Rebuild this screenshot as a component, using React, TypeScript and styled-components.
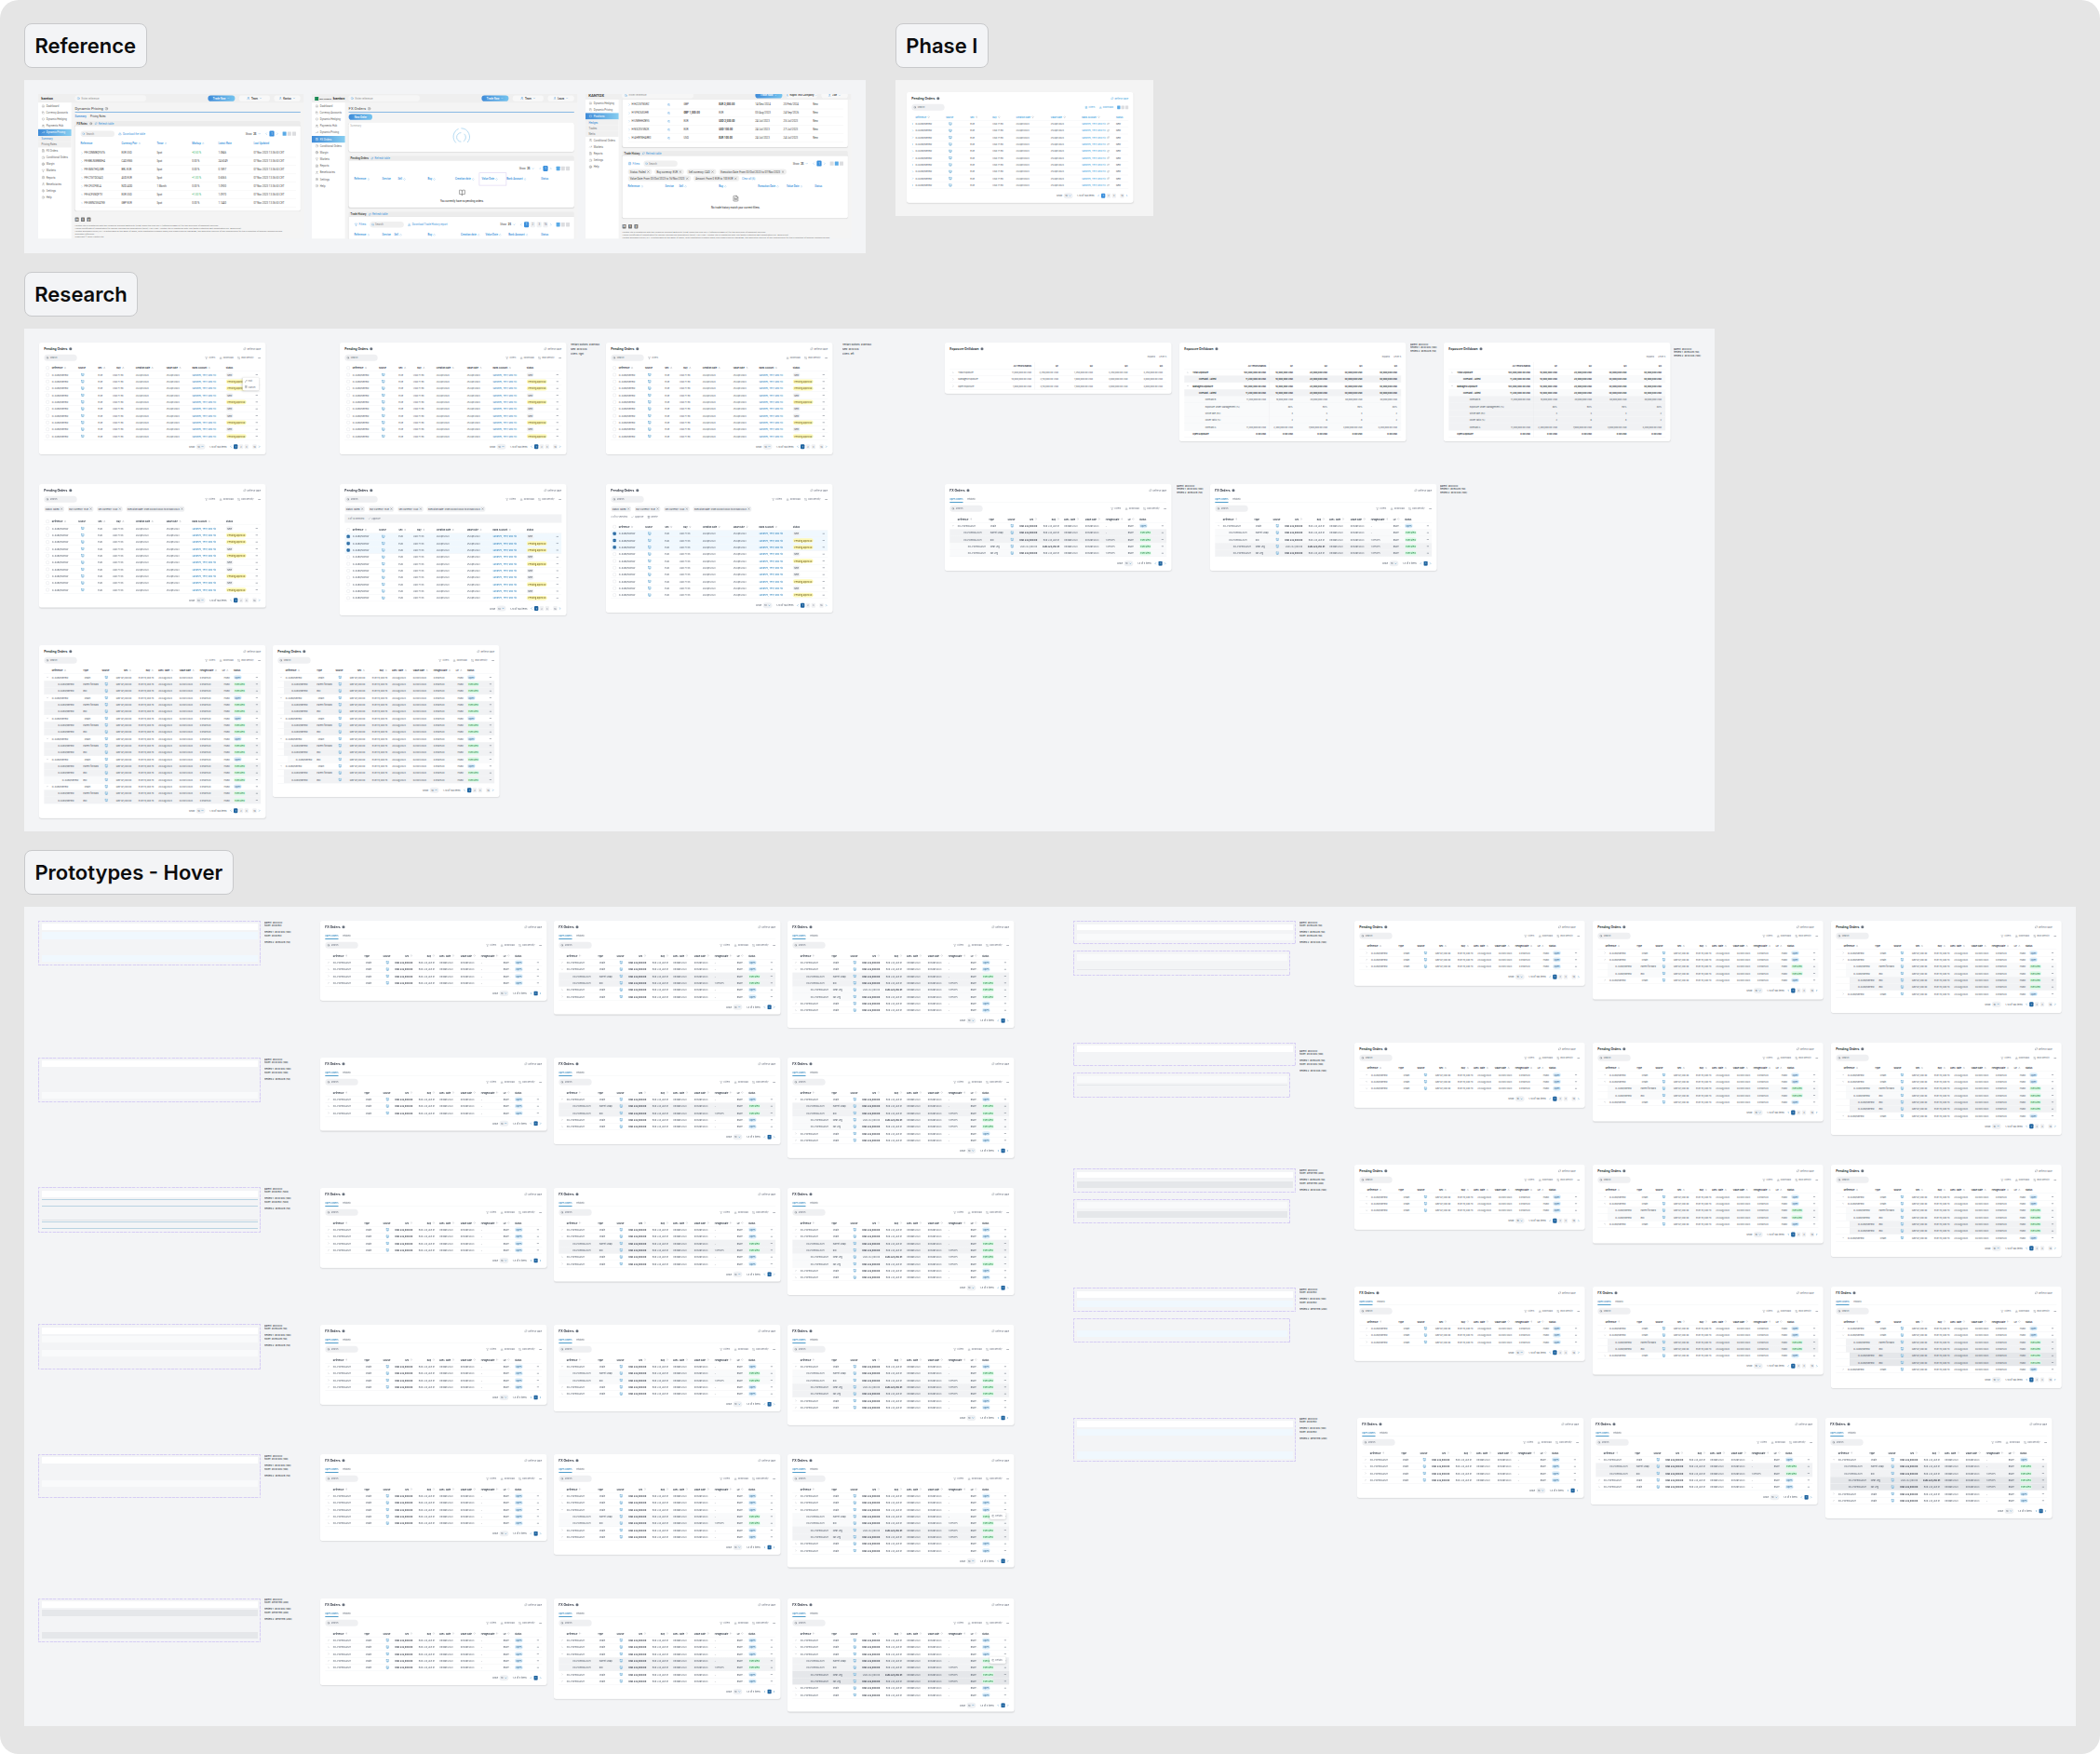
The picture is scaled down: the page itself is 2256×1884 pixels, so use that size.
import React from "react";
import styled, { createGlobalStyle, css } from "styled-components";
import {
  BookOpen, Check, ChevronDown, ChevronLeft, ChevronRight, ChevronsUpDown, ClipboardList, Clock, Copy,
  Download, ExternalLink, FileText, Filter, Globe, HelpCircle, Home, Info, Monitor, MoreHorizontal,
  Pencil, RefreshCw, Search, Settings, ShieldCheck, Trash2, TrendingUp, User, Users, X, ArrowUpDown,
} from "lucide-react";

const Global = createGlobalStyle`
  html, body { margin: 0; background: #fff; }
  * { box-sizing: border-box; }
`;

/* ---------- canvas ---------- */

const Canvas = styled.main`
  position: relative;
  width: 2256px;
  height: 1884px;
  border-radius: 20px;
  background: #e5e5e5;
  overflow: hidden;
  font-family: Inter, "Liberation Sans", sans-serif;
  color: #1f2937;
`;

const SectionLabel = styled.h2<{ $x: number; $y: number; $w: number }>`
  position: absolute;
  left: ${(p) => p.$x}px;
  top: ${(p) => p.$y}px;
  width: ${(p) => p.$w}px;
  height: 48px;
  margin: 0;
  display: flex;
  align-items: center;
  justify-content: center;
  border: 1px solid #c8c9cb;
  border-radius: 8px;
  background: #f3f4f6;
  color: #0c0c0d;
  font-size: 22px;
  font-weight: 600;
  white-space: nowrap;
`;

const SectionPanel = styled.section<{ $x: number; $y: number; $w: number; $h: number; $bg?: string }>`
  position: absolute;
  left: ${(p) => p.$x}px;
  top: ${(p) => p.$y}px;
  width: ${(p) => p.$w}px;
  height: ${(p) => p.$h}px;
  background: ${(p) => p.$bg || "#f3f4f6"};
`;

const Frame = styled.div<{ $x: number; $y: number; $w: number; $zoom?: number }>`
  position: absolute;
  left: ${(p) => p.$x}px;
  top: ${(p) => p.$y}px;
  width: ${(p) => p.$w}px;
  transform: scale(${(p) => 1 / (p.$zoom || 6)});
  transform-origin: 0 0;
`;

/* ---------- table card ---------- */

const CardBox = styled.article<{ $h: number }>`
  position: relative;
  display: flex;
  flex-direction: column;
  height: ${(p) => p.$h}px;
  padding: 20px 32px 0;
  border-radius: 16px;
  background: #fff;
  box-shadow: 0 6px 8px rgba(0, 0, 0, 0.09);
  font-size: 14px;
  color: #374151;
  white-space: nowrap;
`;

const TitleRow = styled.header<{ $pad?: number }>`
  display: flex;
  align-items: center;
  justify-content: space-between;
  height: 40px;
  padding-right: ${(p) => p.$pad || 0}px;
`;

const Title = styled.h3`
  display: flex;
  align-items: center;
  gap: 10px;
  margin: 0;
  font-size: 20px;
  font-weight: 600;
  color: #111827;
`;

const InfoDot = styled(Info)`
  width: 22px;
  height: 22px;
  fill: #4b5563;
  stroke: #d1d5db;
`;

const Action = styled.span<{ $color?: string }>`
  display: inline-flex;
  align-items: center;
  gap: 6px;
  color: ${(p) => p.$color || "#6b7280"};
  svg { width: 19px; height: 19px; }
`;

const Toolbar = styled.div`
  display: flex;
  align-items: center;
  gap: 26px;
  height: 42px;
  margin-top: 17px;
`;

const Push = styled.span`
  flex: 1;
`;

const SearchPill = styled.span`
  display: inline-flex;
  align-items: center;
  gap: 8px;
  width: 212px;
  height: 42px;
  padding: 0 12px;
  border-radius: 21px;
  background: #eff0f2;
  color: #6b7280;
  svg { width: 18px; height: 18px; color: #374151; }
`;

const Tabs = styled.nav`
  display: flex;
  gap: 28px;
  height: 43px;
  margin-top: 17px;
  border-bottom: 2px solid #eceef0;
`;

const Tab = styled.span<{ $on?: boolean }>`
  display: flex;
  align-items: center;
  height: 43px;
  font-weight: ${(p) => (p.$on ? 500 : 400)};
  color: ${(p) => (p.$on ? "#1e7bb8" : "#4b5563")};
  border-bottom: ${(p) => (p.$on ? "6px solid #4f9dcb" : "6px solid transparent")};
`;

const Chips = styled.div`
  display: flex;
  align-items: center;
  gap: 22px;
  height: 42px;
  margin-top: 20px;
`;

const Chip = styled.span`
  display: inline-flex;
  align-items: center;
  gap: 6px;
  height: 38px;
  padding: 0 8px;
  border-radius: 19px;
  background: #f0f1f3;
  color: #374151;
  font-size: 14px;
  svg { width: 20px; height: 20px; }
`;

const BulkBar = styled.div<{ $filled?: boolean }>`
  display: flex;
  align-items: center;
  gap: 24px;
  height: ${(p) => (p.$filled ? 52 : 34)}px;
  margin-top: 14px;
  padding: 0 ${(p) => (p.$filled ? 20 : 0)}px;
  background: ${(p) => (p.$filled ? "#f1f2f4" : "transparent")};
  color: #6b7280;
`;

const Table = styled.div<{ $top: number }>`
  margin-top: ${(p) => p.$top}px;
`;

const Line = styled.div<{ $cols: string; $bg?: string; $inset?: number; $shift?: number; $head?: boolean; $muted?: boolean }>`
  display: grid;
  grid-template-columns: ${(p) => p.$cols};
  align-items: center;
  height: 44px;
  padding-left: ${(p) => p.$shift || 0}px;
  border-bottom: 2px solid #eceef1;
  color: ${(p) => (p.$head ? "#1f2937" : "#4b5563")};
  font-weight: ${(p) => (p.$head ? 600 : 400)};
  ${(p) =>
    p.$bg &&
    css`
      background: linear-gradient(to right, transparent ${p.$inset || 0}px, ${p.$bg} ${p.$inset || 0}px);
    `}
`;

const Cell = styled.span<{ $align?: string; $pad?: number; $bold?: boolean; $color?: string }>`
  display: flex;
  align-items: center;
  gap: 8px;
  justify-content: ${(p) => (p.$align === "right" ? "flex-end" : p.$align === "center" ? "center" : "flex-start")};
  padding-left: ${(p) => p.$pad || 0}px;
  font-weight: ${(p) => (p.$bold ? 600 : "inherit")};
  color: ${(p) => (p.$bold ? "#111827" : p.$color || "inherit")};
  svg { width: 16px; height: 16px; color: #6b7280; }
`;

const SourceIcon = styled(Monitor)`
  &&& { width: 22px; height: 22px; color: #3d8fc4; fill: #cfe6f5; }
`;

const pillColors: Record<string, [string, string]> = {
  New: ["#f0f1f3", "#4b5563"],
  "Pending approval": ["#fef9b8", "#6b5d1c"],
  Open: ["#dbeefb", "#1f5d8c"],
  Executed: ["#dcfce7", "#17803d"],
};

const Pill = styled.span<{ $kind: string }>`
  display: inline-flex;
  align-items: center;
  height: 28px;
  padding: 0 8px;
  border-radius: 14px;
  background: ${(p) => pillColors[p.$kind][0]};
  color: ${(p) => pillColors[p.$kind][1]};
`;

const CheckBox = styled.span<{ $on?: boolean }>`
  display: flex;
  align-items: center;
  justify-content: center;
  width: 20px;
  height: 20px;
  margin-left: 13px;
  border: 2px solid ${(p) => (p.$on ? "#1e639f" : "#d5d8dd")};
  border-radius: 5px;
  background: ${(p) => (p.$on ? "#1e639f" : "#fff")};
  && svg { color: #fff; width: 14px; height: 14px; }
`;

const Footer = styled.footer<{ $color?: string }>`
  display: flex;
  align-items: center;
  justify-content: flex-end;
  gap: 9px;
  height: 36px;
  margin-top: 26px;
  color: #4b5563;
  svg { width: 18px; height: 18px; color: ${(p) => p.$color || "#1e7bb8"}; }
`;

const PageSize = styled.span`
  display: inline-flex;
  align-items: center;
  gap: 8px;
  height: 36px;
  padding: 0 9px;
  margin-right: 18px;
  border-radius: 18px;
  background: #eff1f4;
`;

const PageButton = styled.span<{ $on?: boolean; $color?: string }>`
  display: inline-flex;
  align-items: center;
  justify-content: center;
  width: 26px;
  height: 30px;
  border-radius: 6px;
  background: ${(p) => (p.$on ? p.$color || "#1e639f" : "#f0f1f3")};
  color: ${(p) => (p.$on ? "#fff" : "#6b7280")};
`;

const Menu = styled.div<{ $x: number; $y: number; $h?: number }>`
  position: absolute;
  left: ${(p) => p.$x}px;
  top: ${(p) => p.$y}px;
  display: flex;
  flex-direction: column;
  justify-content: space-around;
  width: 104px;
  height: ${(p) => p.$h || 82}px;
  padding: 4px 12px;
  border-radius: 8px;
  background: #fff;
  box-shadow: 0 4px 14px rgba(0, 0, 0, 0.25);
`;

type Col = { label?: string; w: number; align?: string; pad?: number; sort?: boolean };

const template = (cols: Col[]) => cols.map((c) => `${c.w}px`).join(" ");

function HeaderLine({ cols, check, color }: { cols: Col[]; check?: React.ReactNode; color?: string }) {
  return (
    <Line $cols={template(cols)} $head>
      {cols.map((c, i) => (
        <Cell key={i} $align={c.align} $pad={c.pad} $color={color}>
          {i === 0 && check}
          {c.label}
          {c.sort && <ChevronsUpDown strokeWidth={2.5} />}
        </Cell>
      ))}
    </Line>
  );
}

function Pager({ pages, count, color }: { pages?: boolean; count: string; color?: string }) {
  return (
    <Footer $color={color}>
      Show
      <PageSize>10 <ChevronDown strokeWidth={3} /></PageSize>
      <span>{count}</span>
      <span />
      <ChevronLeft strokeWidth={3} />
      <PageButton $on $color={color}>1</PageButton>
      {pages && (
        <>
          <PageButton>2</PageButton>
          <PageButton>3</PageButton>
          ..
          <PageButton>16</PageButton>
        </>
      )}
      <ChevronRight strokeWidth={3} />
    </Footer>
  );
}

function Heading({ title, pad, color }: { title: string; pad?: number; color?: string }) {
  return (
    <TitleRow $pad={pad}>
      <Title>{title} <InfoDot /></Title>
      <Action $color={color}><RefreshCw /> Refresh table</Action>
    </TitleRow>
  );
}

function Actions({ filters = "right" }: { filters?: "left" | "right" }) {
  return (
    <Toolbar>
      <SearchPill><Search /> Search</SearchPill>
      {filters === "left" && <Action><Filter /> Filters</Action>}
      <Push />
      {filters === "right" && <Action><Filter /> Filters</Action>}
      <Action><Download /> Download</Action>
      <Action><ArrowUpDown /> Row density</Action>
      <Action><MoreHorizontal /></Action>
    </Toolbar>
  );
}

/* ---------- pending orders with selection ---------- */

const pendingCols: Col[] = [
  { w: 51 },
  { label: "Reference", w: 169, sort: true },
  { label: "Source", w: 128 },
  { label: "Sell", w: 60, sort: true },
  { label: "Buy", w: 110, align: "right", sort: true },
  { label: "Creation Date", w: 270, pad: 72, sort: true },
  { label: "Value Date", w: 167, sort: true },
  { label: "Bank Account", w: 218, sort: true },
  { label: "Status", w: 175 },
  { w: 44 },
];

const statuses = [0, 1, 1, 0, 1, 0, 0, 1, 0, 1];

type PendingProps = { x: number; y: number; h: number; chips?: boolean; bulk?: "bar" | "inline"; filters?: "left" | "right"; menu?: boolean };

function PendingCard({ x, y, h, chips, bulk, filters, menu }: PendingProps) {
  const cols = template(pendingCols);
  const top = chips ? (bulk === "bar" ? 26 : bulk ? 25 : 39) : 23;
  return (
    <Frame $x={x} $y={y} $w={1461}>
      <CardBox $h={h}>
        <Heading title="Pending Orders" />
        <Actions filters={filters} />
        {chips && (
          <Chips>
            <Chip>Status: Failed <X /></Chip>
            <Chip>Buy currency: EUR <X /></Chip>
            <Chip>Sell currency: CAD <X /></Chip>
            <Chip>Execution Date: From 03/Oct/2023 to 01/Nov/2023 <X /></Chip>
          </Chips>
        )}
        {bulk && (
          <BulkBar $filled={bulk === "bar"}>
            <span>3 of 10 selected</span>
            <Action><Check /> Approve</Action>
            {bulk === "inline" && <Action><Trash2 /> Delete</Action>}
          </BulkBar>
        )}
        <Table $top={top}>
          <HeaderLine cols={pendingCols} check={<CheckBox />} />
          {statuses.map((s, i) => {
            const on = !!bulk && i < 3;
            return (
              <Line key={i} $cols={cols} $bg={on ? "#f0f8fe" : undefined}>
                <Cell><CheckBox $on={on}>{on && <Check />}</CheckBox></Cell>
                <Cell>O-0ABQ5RPRW</Cell>
                <Cell $pad={18}><SourceIcon /></Cell>
                <Cell>EUR</Cell>
                <Cell $align="right"><span>USD 71.98</span><span /></Cell>
                <Cell $pad={72}>24/Apr/2023</Cell>
                <Cell>25/Apr/2023</Cell>
                <Cell $color="#2f84bd">Sandnes, Terry and Hill</Cell>
                <Cell><Pill $kind={s ? "Pending approval" : "New"}>{s ? "Pending approval" : "New"}</Pill></Cell>
                <Cell $align="center"><MoreHorizontal /></Cell>
              </Line>
            );
          })}
        </Table>
        <Pager pages count="1-10 of 160 items" />
        {menu && (
          <Menu $x={1312} $y={226}>
            <Action><Pencil /> Edit</Action>
            <Action><Trash2 /> Cancel</Action>
          </Menu>
        )}
      </CardBox>
    </Frame>
  );
}

/* ---------- nested order tables ---------- */

const orderCols: Col[] = [
  { w: 51 },
  { label: "Reference", w: 201, sort: true },
  { label: "Type", w: 121 },
  { label: "Source", w: 65 },
  { label: "Sell", w: 125, align: "right", sort: true },
  { label: "Buy", w: 144, align: "right", sort: true },
  { label: "Exec. Date", w: 166, pad: 30, sort: true },
  { label: "Value Date", w: 132, sort: true },
  { label: "Hedged Rate", w: 144, sort: true },
  { label: "LP", w: 73, sort: true },
  { label: "Status", w: 126 },
  { w: 46 },
];

const levelOf: Record<string, number> = { O: 0, V: 0, P: 1, R: 1, S: 1, N: 2, F: 2, L: 2 };

type OrderProps = {
  x: number; y: number; rows: string; fx?: boolean; fxData?: boolean; wide?: boolean; inset?: boolean;
  l1?: string; l2?: string; pad?: number; menuRow?: number;
};

function OrderCard({ x, y, rows, fx, fxData, wide, inset, l1 = "#f1f2f4", l2 = "#f9fafb", pad = 92, menuRow }: OrderProps) {
  const cols = template(orderCols);
  const shift = wide ? 25 : 0;
  const top = fx ? 246 : 186;
  return (
    <Frame $x={x} $y={y} $w={wide ? 1486 : 1461}>
      <CardBox $h={top + 44 * rows.length + (wide ? 100 : pad)}>
        <Heading title={fx ? "FX Orders" : "Pending Orders"} pad={wide ? 28 : 0} />
        {fx && <Tabs><Tab $on>Open Orders</Tab><Tab>Historic</Tab></Tabs>}
        <Actions />
        <Table $top={fx ? 25 : 23}>
          <HeaderLine cols={orderCols} />
          {rows.split("").map((r, i) => {
            const level = levelOf[r];
            const open = r === "V" || r === "S";
            const bg = level === 1 ? l1 : level === 2 ? l2 : undefined;
            const type = fxData
              ? ({ O: "Chain", V: "Chain", P: "Parent Swap", R: "Roll", S: "Roll", N: "Near Leg", F: "Far Leg", L: "Roll" } as Record<string, string>)[r]
              : level === 0 ? "Chain" : r === "P" ? "Parent forward" : "Roll";
            return (
              <Line key={i} $cols={cols} $shift={shift} $bg={bg} $inset={inset || wide ? shift + 14 + level * 25 : 0}>
                <Cell $pad={14 + level * 38}>{level < 2 && (open ? <ChevronDown /> : <ChevronRight />)}</Cell>
                <Cell $pad={level === 0 ? 0 : level === 1 ? 38 : 66}>{fxData ? "KO-POPBWLZUH" : "O-0ABQ5RPRW"}</Cell>
                <Cell $pad={level && !fxData ? 0 : 8}>{type}</Cell>
                <Cell $pad={18}><SourceIcon /></Cell>
                <Cell $align="right" $bold={fxData && r !== "N"}>{fxData ? "USD 232,000.00" : "GBP 67,200.00"}</Cell>
                <Cell $align="right" $bold={fxData && r === "N"}>{fxData ? "EUR 224,265.01" : "EUR 78,488.78"}</Cell>
                <Cell $pad={30}>{fxData ? "09/Mar/2023" : "23/Aug/2023"}</Cell>
                <Cell>{fxData ? "09/Mar/2023" : "02/Oct/2023"}</Cell>
                <Cell>{fxData ? (level === 0 || r === "P" ? "-" : "1.075975") : "0.8561520"}</Cell>
                <Cell $pad={fxData ? 0 : 10}>{fxData ? (level === 0 ? "BNPP..." : "BNPP") : "HSBC"}</Cell>
                <Cell><Pill $kind={level ? "Executed" : "Open"}>{level ? "Executed" : "Open"}</Pill></Cell>
                <Cell $align="center"><MoreHorizontal /></Cell>
              </Line>
            );
          })}
        </Table>
        <Pager pages={!fxData} count={fxData ? "1-5 of 5 items" : "1-10 of 160 items"} />
        {menuRow !== undefined && (
          <Menu $x={1303} $y={top + menuRow * 44 - 2} $h={42}>
            <Action><Copy /> Details</Action>
          </Menu>
        )}
      </CardBox>
    </Frame>
  );
}

/* ---------- phase I card ---------- */

const phaseCols: Col[] = [
  { w: 25 },
  { label: "Reference", w: 196, sort: true },
  { label: "Source", w: 156 },
  { label: "Sell", w: 145, sort: true },
  { label: "Buy", w: 151, sort: true },
  { label: "Creation Date", w: 224, sort: true },
  { label: "Value Date", w: 200, sort: true },
  { label: "Bank Account", w: 221, sort: true },
  { label: "Status", w: 79 },
];

const Squares = styled.span<{ $n?: number }>`
  display: inline-flex;
  gap: 6px;
  i { width: 20px; height: 22px; background: #dcdde0; border-radius: 2px; }
  i:nth-child(${(p) => p.$n || 1}) { background: #5aaae6; }
`;

function PhaseCard() {
  const cols = template(phaseCols);
  return (
    <Frame $x={973.7} $y={99.3} $w={1461}>
      <CardBox $h={712}>
        <Heading title="Pending Orders" color="#3fa3e0" />
        <Toolbar>
          <SearchPill><Search /> Search</SearchPill>
          <Push />
          <Action $color="#3fa3e0"><FileText /> Filters</Action>
          <Action $color="#3fa3e0"><Download /> Download</Action>
          <Squares><i /><i /><i /></Squares>
        </Toolbar>
        <Table $top={20}>
          <HeaderLine cols={phaseCols} color="#3fa3e0" />
          {statuses.map((_, i) => (
            <Line key={i} $cols={cols}>
              <Cell><ChevronRight color="#3fa3e0" strokeWidth={3} /></Cell>
              <Cell>O-0ABQ5RPRW</Cell>
              <Cell $pad={18}><SourceIcon /></Cell>
              <Cell>EUR</Cell>
              <Cell>USD 71.98</Cell>
              <Cell>24/Apr/2023</Cell>
              <Cell>25/Apr/2023</Cell>
              <Cell $color="#3fa3e0">Sandnes, Terry and Hill <ExternalLink /></Cell>
              <Cell>New</Cell>
            </Line>
          ))}
        </Table>
        <Pager pages count="1-10 of 160 items" color="#3b8fdc" />
      </CardBox>
    </Frame>
  );
}

/* ---------- exposure drilldown ---------- */

const ExpCell = styled(Cell)<{ $rule?: boolean }>`
  height: 44px;
  border-right: ${(p) => (p.$rule ? "2px solid #e8eaed" : "none")};
  padding-right: ${(p) => (p.$rule ? 18 : 0)}px;
`;

type ExpRow = { label: string; indent: number; bold?: boolean; bg?: string; open?: boolean; leaf?: boolean; vals: string[] };

const expTemplate = "54px 492px 153px 223px 225px 225px";
const big = ["104,000,000.00 USD", "10,000,000 USD", "20,000,000 USD", "40,000,000 USD", "40,000,000 USD"];

function ExposureCard({ x, rows, h }: { x: number; rows: ExpRow[]; h: number }) {
  return (
    <Frame $x={x} $y={368.3} $w={1461}>
      <CardBox $h={h}>
        <TitleRow><Title>Exposure Drilldown <InfoDot /></Title></TitleRow>
        <Toolbar style={{ marginTop: 7 }}><Push /><Action>Expand</Action><Action>Level 5</Action></Toolbar>
        <Table $top={17}>
          <Line $cols={expTemplate} $head>
            <Cell />
            {["All Tenors/Bands", "Q1", "Q2", "Q3", "Q4"].map((q, i) => (
              <ExpCell key={q} $align="right" $rule={i === 0}>{q}</ExpCell>
            ))}
          </Line>
          {rows.map((r, i) => (
            <Line key={i} $cols={"54px 300px 192px 153px 223px 225px 225px"} $bg={r.bg}>
              <Cell $pad={14 + r.indent * 40}>{!r.leaf && (r.open ? <ChevronDown /> : <ChevronRight />)}</Cell>
              <Cell $pad={r.indent * 40} $bold={r.bold}>{r.label}</Cell>
              {r.vals.map((v, j) => (
                <ExpCell key={j} $align="right" $rule={j === 0} $bold={r.bold}>{v}</ExpCell>
              ))}
            </Line>
          ))}
        </Table>
      </CardBox>
    </Frame>
  );
}

const simpleExposure: ExpRow[] = [
  { label: "Total Exposure", indent: 0, vals: ["11,000,000.00 USD", "2,250,000.00 USD", "1,250,000.00 USD", "3,250,000.00 USD", "4,250,000.00 USD"] },
  { label: "Managed Exposure", indent: 0, vals: ["10,000,000.00 USD", "2,110,000.00 USD", "1,000,000.00 USD", "3,000,000.00 USD", "4,000,000.00 USD"] },
  { label: "Open Exposure", indent: 0, vals: ["1,000,000.00 USD", "4,110,000.00 USD", "1,500,000.00 USD", "3,800,000.00 USD", "4,000,000.00 USD"] },
];

const nestedExposure = (a: string, b: string, c: string): ExpRow[] => [
  { label: "Total Exposure", indent: 0, bold: true, vals: big },
  { label: "Forecast · Latest", indent: 1, bold: true, leaf: true, bg: a, vals: ["11,200,000.00 USD", ...big.slice(1)] },
  { label: "Managed Exposure", indent: 0, bold: true, open: true, vals: big },
  { label: "Forecast · Latest", indent: 1, bold: true, open: true, bg: b, vals: ["11,200,000.00 USD", ...big.slice(1)] },
  { label: "Forecast B", indent: 2, open: true, bg: c, vals: ["11,200,000.00 USD", ...big.slice(1)] },
  { label: "Exposure under Management (%)", indent: 2, leaf: true, bg: c, vals: ["", "80%", "90%", "90%", "80%"] },
  { label: "Strike rate (EU)", indent: 2, leaf: true, bg: c, vals: ["", "3", "4", "3", "2"] },
  { label: "Cover ratio (%)", indent: 2, leaf: true, bg: c, vals: ["", "2", "6", "8", "2"] },
  { label: "Forecast A", indent: 2, bg: c, vals: ["11,200,000.00 USD", "2,200,000.00 USD", "7,000,000.00 USD", "3,000,000.00 USD", "4,200,000.00 USD"] },
  { label: "Open Exposure", indent: 0, bold: true, leaf: true, vals: ["0.00 USD", "0.00 USD", "0.00 USD", "0.00 USD", "0.00 USD"] },
];

/* ---------- annotations and row specimens ---------- */

const NoteBox = styled.pre<{ $loose?: boolean }>`
  margin: 0;
  font-family: Inter, "Liberation Sans", sans-serif;
  font-size: 15px;
  line-height: ${(p) => (p.$loose ? 30 : 21)}px;
  color: #111827;
`;

function Note({ x, y, loose, children }: { x: number; y: number; loose?: boolean; children: string }) {
  return (
    <Frame $x={x} $y={y} $w={260}>
      <NoteBox $loose={loose}>{children}</NoteBox>
    </Frame>
  );
}

const Specimen = styled.div<{ $x: number; $y: number; $w: number; $h: number }>`
  position: absolute;
  left: ${(p) => p.$x}px;
  top: ${(p) => p.$y}px;
  width: ${(p) => p.$w}px;
  height: ${(p) => p.$h}px;
  border: 1px solid transparent;
  border-image: repeating-linear-gradient(135deg, #d6cdf4 0 2px, #e9e7f6 2px 3px) 1;
`;

const Bar = styled.div<{ $y: number; $h: number; $bg: string }>`
  position: absolute;
  left: 2.7px;
  right: 2.2px;
  top: ${(p) => p.$y}px;
  height: ${(p) => p.$h}px;
  background: ${(p) => p.$bg};
`;

type BarSpec = [number, number, string];

function RowSpecimen({ x = 41, y, w = 238.8, h, bars }: { x?: number; y: number; w?: number; h: number; bars: BarSpec[] }) {
  return (
    <Specimen $x={x} $y={y} $w={w} $h={h}>
      {bars.map(([by, bh, bg], i) => <Bar key={i} $y={by - 1} $h={bh} $bg={bg} />)}
    </Specimen>
  );
}

const states = (hover: string, nested: string, last: string) =>
  `parent: #FFFFFF\nhover: ${hover}\n\nnested 1: ${nested}\nhover: ${hover}\n\nnested 2: ${last}`;

/* ---------- product screens ---------- */

const Screen = styled.div`
  display: flex;
  flex-direction: column;
  width: 1427px;
  height: 778px;
  overflow: hidden;
  background: #f4f4f4;
  color: #444;
  font-family: Roboto, "Liberation Sans", sans-serif;
  font-size: 14px;
  white-space: nowrap;
`;

const TopBar = styled.div<{ $up?: boolean }>`
  display: flex;
  align-items: center;
  flex: none;
  height: 46px;
  margin-top: ${(p) => (p.$up ? -16 : 0)}px;
  padding: 0 18px 0 16px;
  background: #efefef;
`;

const Brand = styled.b`
  width: 180px;
  font-size: 22px;
  color: #444;
  letter-spacing: -0.5px;
`;

const BankMark = styled.i`
  display: inline-block;
  width: 20px;
  height: 20px;
  margin-right: 5px;
  background: #1c8a55;
  vertical-align: middle;
`;

const BankName = styled.small`
  margin-right: 8px;
  font-size: 11px;
  vertical-align: middle;
`;

const TopSearch = styled.span`
  display: flex;
  align-items: center;
  gap: 8px;
  width: 384px;
  height: 34px;
  padding: 0 12px;
  border-radius: 17px;
  background: #f6f6f6;
  color: #999;
  svg { width: 17px; height: 17px; color: #3f96dc; }
`;

const TopButton = styled.span<{ $primary?: boolean; $w: number }>`
  display: flex;
  align-items: center;
  justify-content: center;
  gap: 7px;
  width: ${(p) => p.$w}px;
  height: 31px;
  margin-left: 22px;
  border-radius: 16px;
  background: ${(p) => (p.$primary ? "linear-gradient(90deg, #3f8bd8, #74c3ee)" : "#f8f8f8")};
  color: ${(p) => (p.$primary ? "#fff" : "#333")};
  font-weight: 500;
  svg { width: 16px; height: 16px; color: ${(p) => (p.$primary ? "#fff" : "#3f96dc")}; }
`;

const Body = styled.div`
  display: flex;
  flex: 1;
  min-height: 0;
`;

const Side = styled.nav`
  flex: none;
  width: 178px;
  background: #fff;
`;

const SideItem = styled.div<{ $on?: boolean }>`
  display: flex;
  align-items: center;
  gap: 8px;
  height: 35.8px;
  padding: 0 18px;
  color: ${(p) => (p.$on ? "#fff" : "#666")};
  background: ${(p) => (p.$on ? "linear-gradient(90deg, #3f8bd8, #86cdf0)" : "none")};
  svg { width: 18px; height: 18px; color: ${(p) => (p.$on ? "#fff" : "#888")}; }
`;

const SideSub = styled.div<{ $on?: boolean }>`
  height: 31px;
  padding: 8px 18px;
  background: #f0f0f0;
  color: ${(p) => (p.$on ? "#2f86d4" : "#777")};
`;

const Content = styled.div`
  flex: 1;
  min-width: 0;
  padding: 0 18px 0 20px;
`;

const PageTitle = styled.h4`
  display: flex;
  align-items: center;
  gap: 9px;
  height: 53px;
  margin: 0;
  padding-top: 16px;
  border-bottom: 4px solid #6fabe0;
  font-size: 21px;
  font-weight: 400;
  svg { width: 18px; height: 18px; }
`;

const SubTabs = styled.div`
  display: flex;
  gap: 22px;
  height: 46px;
  padding-top: 11px;
  span:first-child { color: #2f86d4; font-weight: 500; }
`;

const BarTitle = styled.div<{ $mt?: number }>`
  display: flex;
  align-items: center;
  gap: 12px;
  height: 27px;
  margin-top: ${(p) => p.$mt || 0}px;
  padding: 0 10px;
  border-radius: 8px 8px 0 0;
  background: #ececec;
  font-weight: 500;
  color: #333;
  span { display: inline-flex; gap: 6px; color: #3f96dc; font-weight: 400; }
  svg { width: 15px; height: 15px; }
`;

const White = styled.div<{ $h: number }>`
  height: ${(p) => p.$h}px;
  padding: 20px 24px 0 30px;
  border-radius: 0 0 10px 10px;
  background: #fff;
  box-shadow: 0 2px 5px rgba(0, 0, 0, 0.1);
`;

const Tools = styled.div`
  display: flex;
  align-items: center;
  gap: 20px;
  height: 42px;
  color: #3f96dc;
`;

const SmallSearch = styled.span`
  display: flex;
  align-items: center;
  gap: 6px;
  width: 182px;
  height: 33px;
  padding: 0 8px;
  border-radius: 17px;
  background: #f0f0f0;
  color: #888;
  svg { width: 15px; height: 15px; color: #3f96dc; }
`;

const ShowSize = styled.span`
  display: inline-flex;
  align-items: center;
  gap: 8px;
  color: #444;
  svg { width: 17px; height: 17px; color: #3f96dc; }
`;

const Grid = styled.div<{ $cols: string; $head?: boolean; $h?: number; $line?: boolean }>`
  display: grid;
  grid-template-columns: ${(p) => p.$cols};
  align-items: center;
  height: ${(p) => p.$h || 44.7}px;
  color: ${(p) => (p.$head ? "#3590da" : "#444")};
  font-weight: ${(p) => (p.$head ? 500 : 400)};
  border-bottom: ${(p) => (p.$line ? "2px solid #f0f0f0" : "none")};
  span { display: flex; align-items: center; gap: 5px; }
  svg { width: 15px; height: 15px; color: #3f96dc; }
`;

const Mark = styled.em<{ $green?: boolean }>`
  font-style: normal;
  color: ${(p) => (p.$green ? "#3fb56b" : "#444")};
`;

const HeadFocus = styled.span`
  height: 70px;
  margin-left: -14px;
  padding-left: 12px;
  border: 3px solid #dcd3f2;
`;

const Empty = styled.div<{ $top: number }>`
  display: flex;
  flex-direction: column;
  align-items: center;
  gap: 22px;
  margin-top: ${(p) => p.$top}px;
  color: #222;
  svg { width: 36px; height: 36px; color: #666; }
`;

const SummaryCard = styled.div`
  display: flex;
  flex-direction: column;
  align-items: center;
  height: 156px;
  margin-top: 15px;
  padding: 8px;
  border-radius: 12px;
  background: #fff;
  box-shadow: 0 2px 5px rgba(0, 0, 0, 0.08);
  color: #aaa;
`;

const SummaryLabel = styled.span`
  align-self: flex-start;
`;

const Legal = styled.div`
  padding-top: 12px;
  font-size: 12px;
  line-height: 15.3px;
  color: #777;
`;

const Social = styled.div<{ $top: number }>`
  display: flex;
  gap: 12px;
  padding: ${(p) => p.$top}px 0 0 0;
  i { display: flex; align-items: center; justify-content: center; width: 20px; height: 22px; border-radius: 3px; background: #777; color: #fff; font: 700 13px Roboto, sans-serif; }
`;

const FilterChips = styled.div`
  display: flex;
  flex-wrap: wrap;
  gap: 5px 14px;
  width: 900px;
  padding-top: 8px;
  span { display: inline-flex; align-items: center; gap: 5px; height: 31px; padding: 0 11px; border-radius: 16px; background: #efefef; }
  b { align-self: center; font-weight: 400; color: #3f96dc; }
  svg { width: 18px; height: 18px; }
`;

const icons = [Home, Copy, ShieldCheck, Users, TrendingUp, ClipboardList, Clock, Globe, Filter, FileText, User, Settings, HelpCircle];

function SideNav({ items, active, subs }: { items: string[]; active: string; subs?: string[] }) {
  return (
    <Side>
      {items.map((it, i) => {
        const Icon = icons[i % icons.length];
        return (
          <React.Fragment key={it}>
            <SideItem $on={it === active}><Icon /> {it}</SideItem>
            {it === active && subs?.map((s, j) => <SideSub key={s} $on={j === 0}>{s}</SideSub>)}
          </React.Fragment>
        );
      })}
    </Side>
  );
}

function Top({ bank, up, team, user, brand }: { bank?: boolean; up?: boolean; team: string; user: string; brand: string }) {
  return (
    <TopBar $up={up}>
      <Brand>
        {bank && <><BankMark /><BankName>BNP PARIBAS</BankName></>}
        {brand}
      </Brand>
      <TopSearch><Search /> Enter reference</TopSearch>
      <Push />
      <TopButton $primary $w={145}>Trade Now <ChevronDown /></TopButton>
      <TopButton $w={166}><Users /> {team} <ChevronDown /></TopButton>
      <TopButton $w={142}><User /> {user} <ChevronDown /></TopButton>
    </TopBar>
  );
}

function Paging({ n = 1, many }: { n?: number; many?: boolean }) {
  return (
    <>
      <ShowSize>Show <b>25</b> <ChevronDown /></ShowSize>
      <ShowSize>
        <ChevronLeft /><PageButton $on $color="#3b8fdc">1</PageButton>
        {many && <><PageButton>2</PageButton><PageButton>3</PageButton><PageButton>16</PageButton></>}
        <ChevronRight />
      </ShowSize>
      <Squares $n={n}><i /><i /><i /></Squares>
    </>
  );
}

const legalText = [
  "Kantox Ltd is registered with the Financial Conduct Authority (FCA) under the PSR 2017 (reference 580343) for the provision of payment services.",
  "HMRC certificate of Registration for Money Laundering Regulations (MLR) 12641987. Kantox Ltd is registered with ICO (Data Protection Act Registration No. Z2963760).",
  "Kantox European Union, S.L. is authorized by the Bank of Spain, with registration number 6890, and supervised by SEPBLAC, the Executive Service of the Commission for the Prevention of Money Laundering and",
  "Monetary Offences.",
  "Copyright © 2023 Kantox Ltd",
];

function PricingScreen() {
  const cols = "219px 190px 189px 141px 190px 1fr";
  const rows = [
    ["FR-C0NMBQYGT6", "EUR USD", "Spot", "+0.50 %", "1.0846"],
    ["FR-BBLNSRBMH4", "CAD ENG", "Spot", "0.00 %", "24.6049"],
    ["FR-5M6THQJMR", "BRL EUR", "Spot", "0.00 %", "0.1897"],
    ["FR-CTGTDC6AQ", "AUD EUR", "Spot", "+1.00 %", "0.6065"],
    ["FR-CFUZFWLA", "NZD ADD", "1 Month", "0.00 %", "1.0900"],
    ["FR-6CF5NQFTV", "EUR USD", "Spot", "+1.00 %", "1.0970"],
    ["FR-GWNZGVATKE", "GBP EUR", "Spot", "0.00 %", "1.1440"],
  ];
  return (
    <Screen>
      <Top team="Team" user="Kantox" brand="kantox" />
      <Body>
        <SideNav
          items={["Dashboard", "Currency Accounts", "Dynamic Hedging", "Payments Hub", "Dynamic Pricing", "FX Orders", "Conditional Orders", "Margin", "Markets", "Reports", "Beneficiaries", "Settings", "Help"]}
          active="Dynamic Pricing"
          subs={["Summary", "Pricing Rates"]}
        />
        <Content>
          <PageTitle>Dynamic Pricing <Info /></PageTitle>
          <SubTabs><span>Summary</span><span>Pricing Rates</span></SubTabs>
          <BarTitle>FX Rates <Info /><span><RefreshCw /> Refresh table</span></BarTitle>
          <White $h={455}>
            <Tools>
              <SmallSearch><Search /> Search</SmallSearch>
              <Action $color="#3f96dc"><Download /> Download the table</Action>
              <Push />
              <Paging />
            </Tools>
            <Grid $cols={cols} $head $h={62}>
              <span>Reference</span><span>Currency Pair <ChevronsUpDown /></span><span>Tenor <ChevronsUpDown /></span>
              <span>Markup <ChevronsUpDown /></span><span>Latest Rate</span><span>Last Updated</span>
            </Grid>
            {rows.map((r) => (
              <Grid key={r[0]} $cols={cols} $line>
                {r.map((c, i) => <span key={i}>{i === 0 && <ChevronRight />}<Mark $green={c[0] === "+"}>{c}</Mark></span>)}
                <span>07 Nov 2023 13:36:53 CET</span>
              </Grid>
            ))}
          </White>
          <Social $top={36}><i>in</i><i>t</i><i>y</i></Social>
          <Legal>{legalText.map((l) => <div key={l}>{l}</div>)}</Legal>
        </Content>
      </Body>
    </Screen>
  );
}

const historyCols = "150px 64px 180px 178px 132px 124px 175px 1fr";

function OrdersScreen() {
  const heads = (
    <>
      <span>Reference <ChevronsUpDown /></span><span>Service</span><span>Sell <ChevronsUpDown /></span>
      <span>Buy <ChevronsUpDown /></span><span>Creation date <ChevronsUpDown /></span>
    </>
  );
  return (
    <Screen>
      <Top bank team="Team" user="Laura" brand="kantox" />
      <Body>
        <SideNav
          items={["Dashboard", "Currency Accounts", "Dynamic Hedging", "Payments Hub", "Dynamic Pricing", "FX Orders", "Conditional Orders", "Margin", "Markets", "Reports", "Beneficiaries", "Settings", "Help"]}
          active="FX Orders"
        />
        <Content>
          <PageTitle>FX Orders <Info /></PageTitle>
          <TopButton $primary $w={127} style={{ marginLeft: 0, marginTop: 9 }}>New Order</TopButton>
          <SummaryCard>
            <SummaryLabel>Summary</SummaryLabel>
            <svg width="104" height="104" viewBox="0 0 104 104" fill="none" stroke="#a3d2ef" strokeWidth="4">
              <path d="M22 84 A46 46 0 0 1 36 9" /><path d="M50 6 A46 46 0 0 1 84 82" />
              <path d="M50 30 A24 24 0 0 0 50 78" /><path d="M66 36 A24 24 0 0 1 62 76" />
            </svg>
          </SummaryCard>
          <BarTitle $mt={22}>Pending Orders <span><RefreshCw /> Refresh table</span></BarTitle>
          <White $h={250}>
            <Tools><Push /><Paging /></Tools>
            <Grid $cols="150px 84px 160px 148px 142px 134px 185px 1fr" $head $h={72}>
              {heads}<HeadFocus>Value Date <ChevronsUpDown /></HeadFocus><span>Bank Account <ChevronsUpDown /></span><span>Status</span>
            </Grid>
            <Empty $top={18}><BookOpen />You currently have no pending orders.</Empty>
          </White>
          <BarTitle $mt={24}>Trade History <span><RefreshCw /> Refresh table</span></BarTitle>
          <White $h={160}>
            <Tools>
              <Action $color="#3f96dc"><Filter /> Filters</Action>
              <SmallSearch><Search /> Search</SmallSearch>
              <Action $color="#3f96dc"><Download /> Download Trade History report</Action>
              <Push />
              <Paging many />
            </Tools>
            <Grid $cols={historyCols} $head $h={68}>
              {heads}<span>Value Date <ChevronsUpDown /></span><span>Bank Account <ChevronsUpDown /></span><span>Status</span>
            </Grid>
          </White>
        </Content>
      </Body>
    </Screen>
  );
}

function PositionsScreen() {
  const cols = "212px 87px 189px 195px 152px 158px 1fr";
  const rows = [
    ["H-HZZGTNSRZ", "GBP", "EUR 2,000.00", "14/Dec/2024", "20/Feb/2024"],
    ["H-VFEZ6XUHR", "GBP 1,000.00", "EUR", "03/Aug/2023", "24/Sep/2026"],
    ["H-UNRHHZB95", "EUR", "USD 2,500.00", "24/Jul/2023", "25/Jul/2023"],
    ["H-NXZXVSN2K", "EUR", "USD 100.00", "24/Jul/2023", "27/Jul/2023"],
    ["H-AHRYNHARR3", "USD", "EUR 100.00", "24/Jul/2023", "24/Jul/2023"],
  ];
  return (
    <Screen>
      <Top up team="Kopra Test Company" user="Zoe" brand="KANTOX" />
      <Body>
        <SideNav
          items={["Dynamic Hedging", "Dynamic Pricing", "Positions", "Conditional Orders", "Markets", "Reports", "Settings", "Help"]}
          active="Positions"
          subs={["Hedges", "Trades", "Netts"]}
        />
        <Content>
          <White $h={255} style={{ paddingTop: 6 }}>
            {rows.map((r) => (
              <Grid key={r[0]} $cols={cols} $line>
                <span><ChevronRight /> {r[0]}</span><span><Copy /></span>
                {r.slice(1).map((c, i) => <span key={i}>{c.includes(".") ? <b>{c}</b> : c}</span>)}
                <span>New</span>
              </Grid>
            ))}
          </White>
          <BarTitle $mt={20}>Trade History <span><RefreshCw /> Refresh table</span></BarTitle>
          <White $h={334}>
            <Tools>
              <Action $color="#3f96dc"><FileText /> Filters</Action>
              <SmallSearch><Search /> Search</SmallSearch>
              <Push />
              <Paging n={2} />
            </Tools>
            <FilterChips>
              <span>Status: Failed <X /></span><span>Buy currency: EUR <X /></span><span>Sell currency: CAD <X /></span>
              <span>Execution Date: From 03/Oct/2023 to 07/Nov/2023 <X /></span>
              <span>Value Date: From 03/Oct/2023 to 16/Nov/2023 <X /></span><span>Amount: From 0 EUR to 100 EUR <X /></span>
              <b>Clear all (6)</b>
            </FilterChips>
            <Grid $cols="200px 74px 214px 210px 154px 151px 1fr" $head $h={54}>
              <span>Reference <ChevronsUpDown /></span><span>Service</span><span>Sell <ChevronsUpDown /></span>
              <span>Buy <ChevronsUpDown /></span><span>Execution Date <ChevronsUpDown /></span>
              <span>Value Date <ChevronsUpDown /></span><span>Status</span>
            </Grid>
            <Empty $top={20}><FileText />No trade history match your current filters.</Empty>
          </White>
          <Social $top={34}><i>in</i><i>t</i><i>y</i></Social>
          <Legal>{legalText.slice(0, 3).map((l) => <div key={l}>{l}</div>)}</Legal>
        </Content>
      </Body>
    </Screen>
  );
}

/* ---------- page ---------- */

const SKY = "#f0f8fe";
const PALE = "#f9fafb";
const STEEL = "#e5e7ea";
const EDGE = "#b9d3e2";

export default function App() {
  return (
    <>
      <Global />
      <Canvas>
        <SectionLabel $x={26} $y={25.3} $w={131.6}>Reference</SectionLabel>
        <SectionPanel $x={26} $y={86} $w={904} $h={186} />
        <Frame $x={41.2} $y={101} $w={1427} $zoom={5}><PricingScreen /></Frame>
        <Frame $x={335} $y={101} $w={1427} $zoom={5}><OrdersScreen /></Frame>
        <Frame $x={628.6} $y={101} $w={1427} $zoom={5}><PositionsScreen /></Frame>

        <SectionLabel $x={962} $y={25.3} $w={99.6}>Phase I</SectionLabel>
        <SectionPanel $x={962} $y={86} $w={277} $h={146.4} $bg="#f4f4f4" />
        <PhaseCard />

        <SectionLabel $x={26} $y={292.3} $w={122}>Research</SectionLabel>
        <SectionPanel $x={26} $y={352.7} $w={1816} $h={540.8} />
        <PendingCard x={41.6} y={368} h={720} menu />
        <PendingCard x={364.5} y={368} h={720} />
        <Note x={613} y={367.5} loose>{"Tertiary buttons: #4B5563\nNew: #F3F4F6\nFilters: right"}</Note>
        <PendingCard x={651.4} y={368} h={720} filters="left" />
        <Note x={904.5} y={367.5} loose>{"Tertiary buttons: #4B5563\nNew: #F3F4F6\nFilters: left"}</Note>
        <PendingCard x={41.6} y={520} h={794} chips />
        <PendingCard x={364.5} y={520} h={846} chips bulk="bar" />
        <PendingCard x={651.4} y={520} h={828} chips bulk="inline" />
        <OrderCard x={41.7} y={692.7} rows="VPRVPRVPRVPRVPRLVPR" pad={92} />
        <OrderCard x={293.2} y={692.7} rows="VPSVPSVPSVPSLVPS" inset pad={88} />

        <ExposureCard x={1015.2} h={328} rows={simpleExposure} />
        <ExposureCard x={1266.6} h={636} rows={nestedExposure("#f1f2f4", "#f1f2f4", PALE)} />
        <Note x={1514.5} y={368}>{"parent: #FFFFFF\nnested 1: #F3F4F6 (100)\nnested 2: #F9FAFB (50)"}</Note>
        <ExposureCard x={1550.7} h={636} rows={nestedExposure(PALE, PALE, "#f1f2f4")} />
        <Note x={1798} y={372.5}>{"parent: #FFFFFF\nnested 1: #F9FAFB (50)\nnested 2: #F3F4F6 (100)"}</Note>
        <OrderCard x={1015.2} y={520.3} rows="VPSNF" fx fxData />
        <Note x={1263.6} y={520}>{"parent: #FFFFFF\nnested 1: #F3F4F6 (100)\nnested 2: #F9FAFB (50)"}</Note>
        <OrderCard x={1299.5} y={520.3} rows="VPSNF" fx fxData l1={PALE} l2="#f1f2f4" />
        <Note x={1547} y={520}>{"parent: #FFFFFF\nnested 1: #F9FAFB (50)\nnested 2: #F3F4F6 (100)"}</Note>

        <SectionLabel $x={26} $y={913.3} $w={224.6}>Prototypes - Hover</SectionLabel>
        <SectionPanel $x={26} $y={973.5} $w={2204} $h={880.6} />

        <RowSpecimen y={989.3} h={47.4} bars={[[3.2, 7, "#fff"], [12.2, 7.3, SKY], [36.8, 7, SKY]]} />
        <Note x={284} y={989.3}>{states("#F0F9FF", "#F3F4F6 (100)", "#F9FAFB (50)")}</Note>
        <OrderCard x={343.7} y={989} rows="OOOO" fx fxData />
        <OrderCard x={595} y={989} rows="OVPROO" fx fxData />
        <OrderCard x={846.4} y={989} rows="OVPSNFOO" fx fxData />

        <RowSpecimen y={1136} h={47.6} bars={[[3.2, 7, "#fff"], [36.8, 7.2, PALE]]} />
        <Note x={284} y={1136}>{states("#F3F4F6 (100)", "#F3F4F6 (100)", "#F9FAFB (50)")}</Note>
        <OrderCard x={343.7} y={1136} rows="OOO" fx fxData />
        <OrderCard x={595} y={1136} rows="VPROO" fx fxData />
        <OrderCard x={846.4} y={1136} rows="VPSNFOO" fx fxData />

        <RowSpecimen y={1275.4} h={48.3} bars={[[3.6, 7.2, "#fff"], [12.5, 0.8, EDGE], [19.7, 0.8, EDGE], [34.5, 0.4, "#dfe2e6"], [36.6, 0.8, EDGE], [43.7, 0.8, EDGE]]} />
        <Note x={284} y={1275.4}>{states("#F0F9FF (500)", "#F3F4F6 (100)", "#F9FAFB (50)")}</Note>
        <OrderCard x={343.7} y={1275.8} rows="OOOO" fx fxData />
        <OrderCard x={595} y={1275.8} rows="OVPROO" fx fxData />
        <OrderCard x={846.4} y={1275.8} rows="OVPSNFOO" fx fxData />

        <RowSpecimen y={1422.3} h={48.5} bars={[[3.4, 7.2, "#fff"], [13, 7, PALE], [28, 7, PALE]]} />
        <Note x={284} y={1422.3}>{states("#F9FAFB (50)", "#F3F4F6 (100)", "#F9FAFB (50)")}</Note>
        <OrderCard x={343.7} y={1422.5} rows="OOOO" fx fxData />
        <OrderCard x={595} y={1422.5} rows="VPROO" fx fxData l1={PALE} />
        <OrderCard x={846.4} y={1422.5} rows="VPSNFOO" fx fxData l1={PALE} l2="#f1f2f4" />

        <RowSpecimen y={1562.2} h={47.3} bars={[[3, 7.2, "#fff"], [28, 7, PALE]]} />
        <Note x={284} y={1562}>{states("#F3F4F6 (100)", "#F3F4F6 (100)", "#F9FAFB (50)")}</Note>
        <OrderCard x={343.7} y={1562} rows="OOOOO" fx fxData />
        <OrderCard x={595} y={1562} rows="OOVPROO" fx fxData l1={PALE} />
        <OrderCard x={846.4} y={1562} rows="OOVPSNFOO" fx fxData l1={PALE} l2="#f1f2f4" pad={86} menuRow={3} />

        <RowSpecimen y={1716.6} h={47} bars={[[3, 7.2, "#fff"], [12.4, 7.2, STEEL], [36.6, 7.2, STEEL]]} />
        <Note x={284} y={1716.4}>{states("#E5E7EB (200)", "#F3F4F6 (100)", "#E5E7EB (200)")}</Note>
        <OrderCard x={343.7} y={1716.5} rows="OOOOO" fx fxData />
        <OrderCard x={595} y={1716.5} rows="OOVPROO" fx fxData />
        <OrderCard x={846.4} y={1716.5} rows="OOVPSNFOO" fx fxData l2={STEEL} pad={86} menuRow={3} />

        <RowSpecimen x={1153.2} y={989.2} h={24.6} bars={[[3.6, 6.6, "#fff"], [13.6, 7, PALE]]} />
        <RowSpecimen x={1153.2} y={1021.2} w={232.6} h={26.6} bars={[[3.4, 7.2, PALE], [20.2, 0.4, "#e5e7eb"]]} />
        <Note x={1396.4} y={989}>{states("#F9FAFB (50)", "#F9FAFB (50)", "#F3F4F6 (100)")}</Note>
        <OrderCard x={1455.4} y={989} rows="OOO" wide />
        <OrderCard x={1710.8} y={989} rows="OOPRO" wide l1={PALE} />
        <OrderCard x={1966.6} y={989} rows="OOPSLLO" wide l1={PALE} l2="#f1f2f4" />

        <RowSpecimen x={1153.2} y={1120.2} h={24.6} bars={[[3.2, 6.8, "#fff"]]} />
        <RowSpecimen x={1153.2} y={1152.2} w={232.6} h={26.6} bars={[[3.6, 7.2, PALE], [12.8, 0.4, "#e5e7eb"]]} />
        <Note x={1396.4} y={1127}>{states("#F3F4F6 (100)", "#F9FAFB (50)", "#F3F4F6 (100)")}</Note>
        <OrderCard x={1455.4} y={1120} rows="VVV" wide />
        <OrderCard x={1710.8} y={1120} rows="VVPSV" wide l1={PALE} />
        <OrderCard x={1966.6} y={1120} rows="VVPSLLV" wide l1={PALE} l2="#f1f2f4" />

        <RowSpecimen x={1153.2} y={1255.2} h={25.6} bars={[[3.4, 6.8, "#fff"], [13.6, 7.2, STEEL]]} />
        <RowSpecimen x={1153.2} y={1288.2} w={232.6} h={25.6} bars={[[2.6, 7.2, PALE], [12.8, 7.2, STEEL]]} />
        <Note x={1396.4} y={1255}>{states("#E5E7EB (200)", "#F9FAFB (50)", "#F3F4F6 (100)")}</Note>
        <OrderCard x={1455.4} y={1250.8} rows="VVV" wide />
        <OrderCard x={1710.8} y={1250.8} rows="VVPSV" wide l1={PALE} />
        <OrderCard x={1966.6} y={1250.8} rows="VVPSLLV" wide l1={PALE} l2="#f1f2f4" />

        <RowSpecimen x={1153.2} y={1383.3} h={25.6} bars={[[3.4, 7, "#fff"], [13.8, 7, SKY]]} />
        <RowSpecimen x={1153.2} y={1416.4} w={232.6} h={25.2} bars={[[12.4, 7, SKY]]} />
        <Note x={1396.4} y={1382.6}>{states("#F0F9FF", "#F3F4F6 (100)", "#E5E7EB (200)")}</Note>
        <OrderCard x={1455.4} y={1381.6} rows="OOO" wide fx />
        <OrderCard x={1710.8} y={1381.6} rows="OVPRO" wide fx />
        <OrderCard x={1966.6} y={1381.6} rows="OVPSLLO" wide fx l2={STEEL} />

        <RowSpecimen x={1153.2} y={1522.7} h={47.6} bars={[[3.4, 7, "#fff"], [12.4, 7.2, SKY], [36.8, 7.2, SKY]]} />
        <Note x={1396.4} y={1522}>{states("#F0F9FF", "#F3F4F6 (100)", "#E5E7EB (200)")}</Note>
        <OrderCard x={1458.1} y={1523} rows="OOOO" fx fxData />
        <OrderCard x={1709.4} y={1523} rows="VPROO" fx fxData />
        <OrderCard x={1961.2} y={1523} rows="VPRNFOO" fx fxData l2={STEEL} />
      </Canvas>
    </>
  );
}
